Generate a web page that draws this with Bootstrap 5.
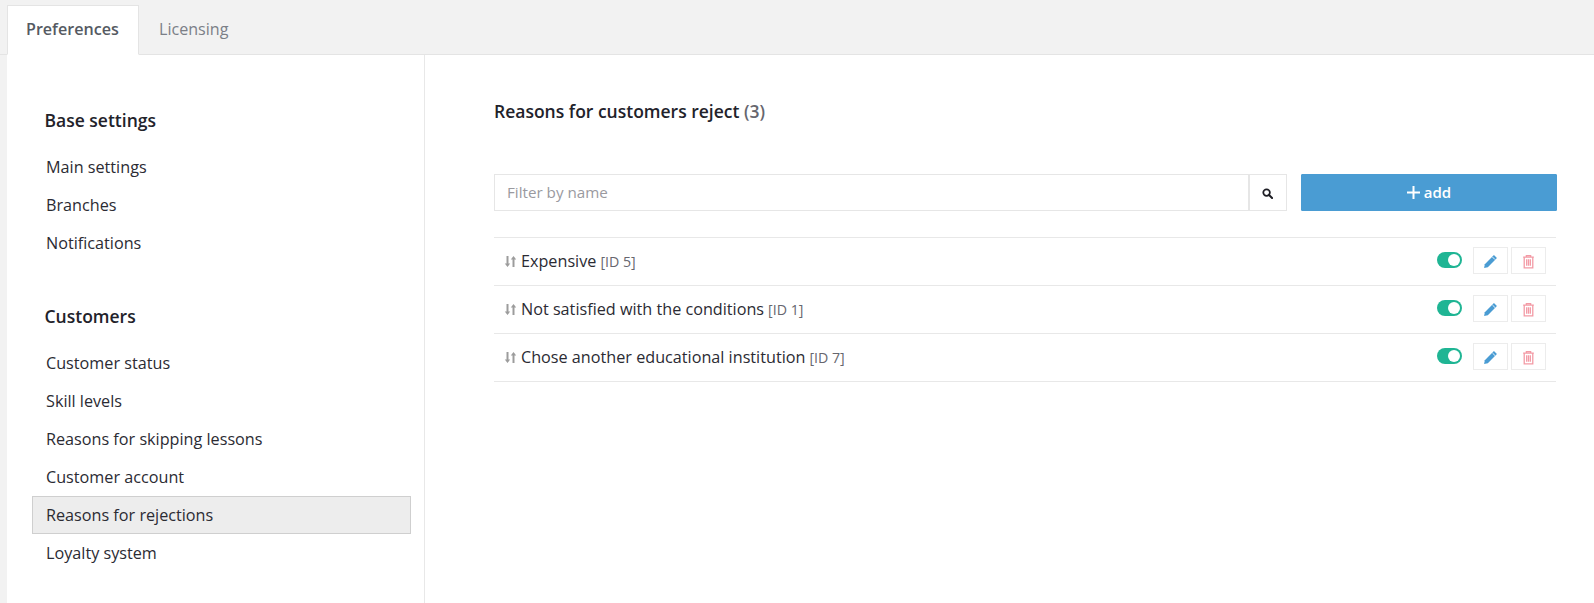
<!DOCTYPE html>
<html lang="en">
<head>
    <meta charset="UTF-8">
    <title>Preferences</title>
    <link href="https://cdn.jsdelivr.net/npm/bootstrap@5.3.0/dist/css/bootstrap.min.css" rel="stylesheet">
    <style>
        html, body { height: 100%; }
        body { background: #f2f2f2; font-family: "Open Sans", sans-serif; font-size: 16px; color: #2b2b33; overflow: hidden; }

        /* tabs */
        .top-tabs { padding: 5px 0 0 7px; height: 55px; border-bottom: 1px solid #e4e4e4; }
        .top-tabs .nav-link { height: 50px; padding: 0 19px; line-height: 47px; font-size: 16.1px; color: #7b7f87; border: 1px solid transparent; border-radius: 0; margin: 0; }
        .top-tabs .nav-link.active { background: #fff; color: #555a62; font-weight: 600; border-color: #e4e4e4 #e4e4e4 #fff; padding: 0 18px; width: 132px; }

        .settings-body { margin-left: 7px; background: #fff; height: 548px; }

        /* left menu */
        .side-menu { width: 418px; flex: none; border-right: 1px solid #e8e8e8; padding: 46px 13px 0 25px; }
        .menu-title { font-size: 17.5px; font-weight: 600; color: #22222a; margin: 0 0 9px 12.500px; line-height: 38px; }
        .menu-group { margin-bottom: 35px; }
        .menu-link { display: block; height: 38px; line-height: 36px; padding-left: 13px; font-size: 16.2px; color: #2b2b33; text-decoration: none; border: 1px solid transparent; }
        .menu-link.active { background: #ededed; border-color: #cfcfcf; }

        /* right panel */
        .reasons-panel { flex: 1; padding: 44px 37px 0 69px; min-width: 0; }
        .panel-title { font-size: 17.5px; font-weight: 600; color: #22222a; line-height: 24px; margin: 0 0 51px; }
        .panel-title span { color: #66666e; }
        .filter-input { height: 37px; border-radius: 0; border: 1px solid #e6e6e6; font-size: 15.2px; padding: 0 0 2px 12px; box-shadow: none; }
        .filter-input::placeholder { color: #9a9a9f; }
        .search-btn { width: 38px; height: 37px; padding: 0 2px 2px 0; border: 1px solid #e6e6e6; border-radius: 0; background: #fff; }
        .add-btn { width: 256px; height: 37px; margin-left: 14px; padding: 0 0 1px; background: #4a9cd3; border-color: #4a9cd3; border-radius: 1px; font-size: 15px; font-weight: 600; }
        .add-btn:hover { background: #4a9cd3; border-color: #4a9cd3; }

        .reason-list { margin-top: 26px; border-top: 1px solid #e8e8e8; width: 1062px; }
        .reason-row { height: 48px; border-bottom: 1px solid #e8e8e8; padding: 0 10px 1px; }
        .reason-name { color: #2b2b33; margin-left: 4px; font-size: 16.2px; }
        .reason-id { color: #66666e; font-size: 14.2px; margin-left: 1px; padding-top: 1px; }
        .toggle-pill { width: 25px; height: 16px; border-radius: 8px; background: #1fb594; position: relative; margin: -2px 11px 0 0; }
        .toggle-pill::after { content: ""; position: absolute; right: 2px; top: 2px; width: 12px; height: 12px; border-radius: 50%; background: #fff; }
        .icon-btn { width: 35px; height: 27px; padding: 0; border: 1px solid #ececec; border-radius: 0; background: #fff; margin: -2px 0 0 3px; line-height: 1; }
        .icon-btn:first-of-type { margin-left: 0; }
    </style>
</head>
<body>
    <ul class="nav top-tabs">
        <li class="nav-item"><a class="nav-link active" href="#">Preferences</a></li>
        <li class="nav-item"><a class="nav-link" href="#">Licensing</a></li>
    </ul>

    <div class="settings-body d-flex">
        <div class="side-menu">
            <div class="menu-group">
                <h6 class="menu-title">Base settings</h6>
                <a class="menu-link" href="#">Main settings</a>
                <a class="menu-link" href="#">Branches</a>
                <a class="menu-link" href="#">Notifications</a>
            </div>
            <div class="menu-group">
                <h6 class="menu-title">Customers</h6>
                <a class="menu-link" href="#">Customer status</a>
                <a class="menu-link" href="#">Skill levels</a>
                <a class="menu-link" href="#">Reasons for skipping lessons</a>
                <a class="menu-link" href="#">Customer account</a>
                <a class="menu-link active" href="#">Reasons for rejections</a>
                <a class="menu-link" href="#">Loyalty system</a>
            </div>
        </div>

        <div class="reasons-panel">
            <h5 class="panel-title">Reasons for customers reject <span>(3)</span></h5>

            <div class="d-flex">
                <input class="form-control filter-input" type="text" placeholder="Filter by name">
                <button class="btn search-btn flex-shrink-0" type="button">
                    <svg width="11" height="11" viewBox="0 0 12 12"><circle cx="5" cy="5" r="3.6" fill="none" stroke="#1d1d24" stroke-width="1.9"/><path d="M7.700 7.700 11 11" stroke="#1d1d24" stroke-width="2.2" stroke-linecap="round"/></svg>
                </button>
                <button class="btn btn-primary add-btn flex-shrink-0 d-flex align-items-center justify-content-center" type="button">
                    <svg class="me-1" width="13" height="13" viewBox="0 0 13 13"><path d="M6.500 0v13M0 6.500h13" stroke="#fff" stroke-width="2"/></svg>add
                </button>
            </div>

            <div class="reason-list">
                <div class="reason-row d-flex align-items-center">
                    <svg width="13" height="13" viewBox="0 0 13 13"><path d="M3.500 1v9" stroke="#9c9c9c" stroke-width="2"/><path d="M.8 8.500h5.400L3.500 12zM6.800 4.500h5.400L9.500 1z" fill="#9c9c9c"/><path d="M9.500 12V3" stroke="#9c9c9c" stroke-width="2"/></svg>
                    <span class="reason-name">Expensive</span> <span class="reason-id ms-1">[ID 5]</span>
                    <div class="ms-auto d-flex align-items-center">
                        <div class="toggle-pill"></div>
                        <button class="btn icon-btn" type="button"><svg width="15" height="15" viewBox="0 0 14 14"><path d="M10.200 1 13 3.800 4.500 12.300 1 13l.7-3.500z" fill="#4a9cd3"/><path d="M8.800 2.800l2.400 2.400" stroke="#fff" stroke-width=".8"/></svg></button>
                        <button class="btn icon-btn" type="button"><svg width="13" height="15" viewBox="0 0 12 14"><path d="M1 3h10M4 3V1.500h4V3M2 3v10h8V3M4.300 5v6M6 5v6M7.700 5v6" fill="none" stroke="#f39aa5" stroke-width="1.200"/></svg></button>
                    </div>
                </div>
                <div class="reason-row d-flex align-items-center">
                    <svg width="13" height="13" viewBox="0 0 13 13"><path d="M3.500 1v9" stroke="#9c9c9c" stroke-width="2"/><path d="M.8 8.500h5.400L3.500 12zM6.800 4.500h5.400L9.500 1z" fill="#9c9c9c"/><path d="M9.500 12V3" stroke="#9c9c9c" stroke-width="2"/></svg>
                    <span class="reason-name">Not satisfied with the conditions</span> <span class="reason-id ms-1">[ID 1]</span>
                    <div class="ms-auto d-flex align-items-center">
                        <div class="toggle-pill"></div>
                        <button class="btn icon-btn" type="button"><svg width="15" height="15" viewBox="0 0 14 14"><path d="M10.200 1 13 3.800 4.500 12.300 1 13l.7-3.500z" fill="#4a9cd3"/><path d="M8.800 2.800l2.400 2.400" stroke="#fff" stroke-width=".8"/></svg></button>
                        <button class="btn icon-btn" type="button"><svg width="13" height="15" viewBox="0 0 12 14"><path d="M1 3h10M4 3V1.500h4V3M2 3v10h8V3M4.300 5v6M6 5v6M7.700 5v6" fill="none" stroke="#f39aa5" stroke-width="1.200"/></svg></button>
                    </div>
                </div>
                <div class="reason-row d-flex align-items-center">
                    <svg width="13" height="13" viewBox="0 0 13 13"><path d="M3.500 1v9" stroke="#9c9c9c" stroke-width="2"/><path d="M.8 8.500h5.400L3.500 12zM6.800 4.500h5.400L9.500 1z" fill="#9c9c9c"/><path d="M9.500 12V3" stroke="#9c9c9c" stroke-width="2"/></svg>
                    <span class="reason-name">Chose another educational institution</span> <span class="reason-id ms-1">[ID 7]</span>
                    <div class="ms-auto d-flex align-items-center">
                        <div class="toggle-pill"></div>
                        <button class="btn icon-btn" type="button"><svg width="15" height="15" viewBox="0 0 14 14"><path d="M10.200 1 13 3.800 4.500 12.300 1 13l.7-3.500z" fill="#4a9cd3"/><path d="M8.800 2.800l2.400 2.400" stroke="#fff" stroke-width=".8"/></svg></button>
                        <button class="btn icon-btn" type="button"><svg width="13" height="15" viewBox="0 0 12 14"><path d="M1 3h10M4 3V1.500h4V3M2 3v10h8V3M4.300 5v6M6 5v6M7.700 5v6" fill="none" stroke="#f39aa5" stroke-width="1.200"/></svg></button>
                    </div>
                </div>
            </div>
        </div>
    </div>

    <script src="https://cdn.jsdelivr.net/npm/bootstrap@5.3.0/dist/js/bootstrap.bundle.min.js"></script>
</body>
</html>
